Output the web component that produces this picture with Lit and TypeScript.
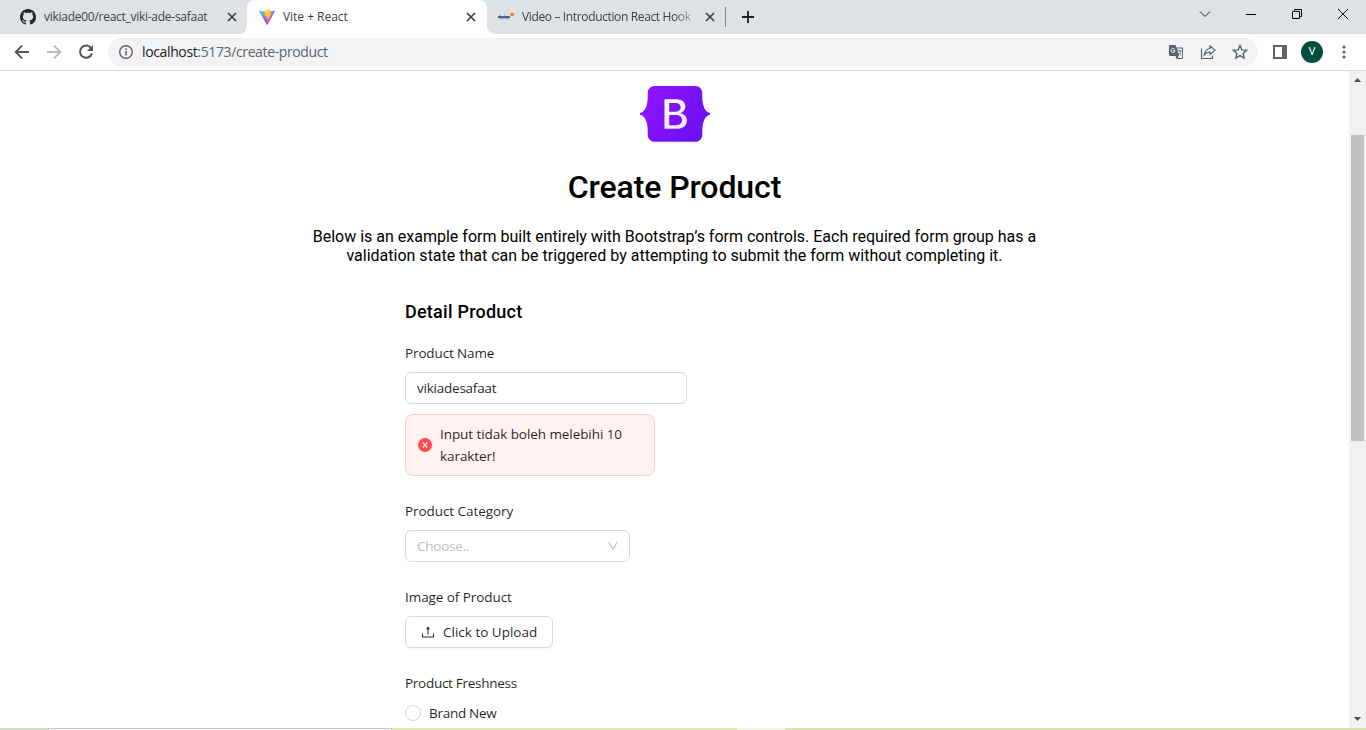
import { LitElement, html, css, svg } from "lit";
import { customElement } from "lit/decorators.js";

const closeIcon = html`<svg class="close" width="10" height="10" viewBox="0 0 10 10">
  <path d="M1 1l8 8M9 1l-8 8" stroke="#3c4043" stroke-width="1.7" fill="none" />
</svg>`;

const githubIcon = html`<svg width="16" height="16" viewBox="0 0 16 16">
  <path fill="#24292f" d="M8 0C3.58 0 0 3.58 0 8c0 3.54 2.29 6.53 5.47 7.59.4.07.55-.17.55-.38 0-.19-.01-.82-.01-1.49-2.01.37-2.53-.49-2.69-.94-.09-.23-.48-.94-.82-1.13-.28-.15-.68-.52-.01-.53.63-.01 1.08.58 1.23.82.72 1.21 1.87.87 2.33.66.07-.52.28-.87.51-1.07-1.78-.2-3.64-.89-3.64-3.95 0-.87.31-1.59.82-2.15-.08-.2-.36-1.02.08-2.12 0 0 .67-.21 2.2.82.64-.18 1.32-.27 2-.27s1.36.09 2 .27c1.53-1.04 2.2-.82 2.2-.82.44 1.1.16 1.92.08 2.12.51.56.82 1.27.82 2.15 0 3.07-1.87 3.75-3.65 3.95.29.25.54.73.54 1.48 0 1.07-.01 1.93-.01 2.2 0 .21.15.46.55.38A8.01 8.01 0 0 0 16 8c0-4.42-3.58-8-8-8z" />
</svg>`;

const viteIcon = html`<svg width="16" height="16" viewBox="0 0 256 257">
  <defs>
    <linearGradient id="vite-a" x1="-.8%" x2="57.6%" y1="7.7%" y2="78.4%">
      <stop offset="0%" stop-color="#41d1ff" /><stop offset="100%" stop-color="#bd34fe" />
    </linearGradient>
    <linearGradient id="vite-b" x1="43.4%" x2="50.3%" y1="2.2%" y2="89%">
      <stop offset="0%" stop-color="#ffea83" /><stop offset="8.3%" stop-color="#ffdd35" /><stop offset="100%" stop-color="#ffa800" />
    </linearGradient>
  </defs>
  <path fill="url(#vite-a)" d="M255.153 37.938L134.897 252.976c-2.483 4.44-8.862 4.466-11.382.048L.875 37.958c-2.746-4.814 1.371-10.646 6.827-9.67l120.385 21.517a6.537 6.537 0 0 0 2.322-.004l117.867-21.483c5.438-.991 9.574 4.796 6.877 9.62z" />
  <path fill="url(#vite-b)" d="M185.432.063L96.44 17.501a3.268 3.268 0 0 0-2.634 3.014l-5.474 92.456a3.268 3.268 0 0 0 3.997 3.378l24.777-5.718c2.318-.535 4.413 1.507 3.936 3.838l-7.361 36.047c-.495 2.426 1.782 4.5 4.151 3.78l15.304-4.649c2.372-.72 4.652 1.36 4.15 3.788l-11.698 56.621c-.732 3.542 3.979 5.473 5.943 2.437l1.313-2.028l72.516-144.72c1.215-2.423-.88-5.186-3.54-4.672l-25.505 4.922c-2.396.462-4.435-1.77-3.759-4.114l16.646-57.705c.677-2.35-1.37-4.583-3.769-4.113z" />
</svg>`;

const starPath = svg`<path d="M8 1.6l1.9 4.3 4.7.45-3.5 3.1 1 4.6L8 11.6l-4.1 2.45 1-4.6-3.5-3.1 4.7-.45z" fill="none" stroke="#5f6368" stroke-width="1.4" />`;

@customElement("browser-tabs")
class BrowserTabs extends LitElement {
  static styles = css`
    :host { display: flex; height: 34px; background: #dee1e6; font: 12px "Open Sans", "Noto Sans", sans-serif; color: #3c4043; }
    .tab { display: flex; align-items: center; box-sizing: border-box; height: 34px; white-space: nowrap; }
    .first { width: 247px; padding: 0 10px 0 20px; border-radius: 0 0 8px 0; }
    .last { width: 238px; padding: 0 10px 0 11px; border-radius: 0 0 0 8px; }
    .shade { background: #dee1e6; }
    .under { background: #fff; display: flex; }
    .active-bg { background: #dee1e6; }
    .active { width: 240px; padding: 0 11px 0 12px; background: #fff; border-radius: 8px 8px 0 0; }
    .name { flex: 1; margin-left: 8px; line-height: 18px; }
    .n1 { letter-spacing: -0.27px; }
    .n2 { letter-spacing: -0.03px; }
    .n3 { letter-spacing: -0.36px; -webkit-mask-image: linear-gradient(90deg, #000 88%, rgba(0, 0, 0, 0.25)); margin-right: 11px; }
    .close { flex: none; }
    .sep { width: 1px; height: 20px; margin: 7px 16px 0 0; background: #80868b; }
    .plus { margin-top: 11px; }
    .win { display: flex; margin-left: auto; margin-right: 17px; gap: 34px; padding-top: 8px; }
  `;
  render() {
    return html`
      <div class="under"><div class="tab first shade">${githubIcon}<span class="name n1">vikiade00/react_viki-ade-safaat</span>${closeIcon}</div></div>
      <div class="active-bg"><div class="tab active">${viteIcon}<span class="name n2">Vite + React</span>${closeIcon}</div></div>
      <div class="under"><div class="tab last shade">
        <svg width="16" height="16" viewBox="0 0 16 16"><path d="M0 7h12v2H0z" fill="#4c6385" /><path d="M1 6.3h2M6 5.8h1M1 9.6h10" stroke="#8b9bb2" stroke-width=".8" /><circle cx="14.2" cy="5.6" r="1.8" fill="#f4742b" /></svg>
        <span class="name n3">Video – Introduction React Hook</span>${closeIcon}</div></div>
      <div class="sep"></div>
      <svg class="plus" width="12" height="12" viewBox="0 0 12 12"><path d="M6 0v12M0 6h12" stroke="#202124" stroke-width="1.8" /></svg>
      <div class="win">
        <svg width="12" height="12" viewBox="0 0 12 12"><path d="M1 3.5l5 5 5-5" fill="none" stroke="#222" /></svg>
        <svg width="12" height="12" viewBox="0 0 12 12"><path d="M1 6.5h10" stroke="#000" /></svg>
        <svg width="12" height="12" viewBox="0 0 12 12"><path d="M1.5 3.5h7v7h-7zM3.5 3.5v-2h7v7h-2" fill="none" stroke="#000" /></svg>
        <svg width="12" height="12" viewBox="0 0 12 12"><path d="M1 1l10 10M11 1L1 11" stroke="#111" /></svg>
      </div>`;
  }
}

@customElement("browser-toolbar")
class BrowserToolbar extends LitElement {
  static styles = css`
    :host { display: flex; align-items: center; box-sizing: border-box; height: 37px; padding: 0 14px; border-bottom: 1px solid #d9dadc; background: #fff; }
    .nav { display: flex; gap: 16px; margin-right: 14px; }
    .bar { display: flex; flex: none; align-items: center; box-sizing: border-box; width: 1150px; height: 28px; padding: 0 10px; border-radius: 14px; background: #f1f3f4; }
    .url { flex: 1; margin-left: 8px; font: 14px/20px "Open Sans", "Noto Sans", sans-serif; letter-spacing: -0.37px; color: #5f6368; white-space: nowrap; }
    .host { color: #202124; }
    .acts { display: flex; gap: 16px; }
    .right { display: flex; align-items: center; margin-left: 14px; }
    .avatar { width: 22px; height: 22px; margin: 0 13px; border-radius: 50%; background: #004d40; color: #fff; text-align: center; font: 11px/22px Roboto, sans-serif; }
  `;
  render() {
    return html`
      <div class="nav">
        <svg width="16" height="16" viewBox="0 0 16 16"><path d="M15 8H2M8 1.7L1.7 8 8 14.3" fill="none" stroke="#54585c" stroke-width="1.9" /></svg>
        <svg width="16" height="16" viewBox="0 0 16 16"><path d="M1 8h13M8 1.7L14.3 8 8 14.3" fill="none" stroke="#babcbe" stroke-width="1.9" /></svg>
        <svg width="16" height="16" viewBox="0 0 16 16"><path d="M13.2 4.2A6.1 6.1 0 1 0 14 9.4" fill="none" stroke="#54585c" stroke-width="2" /><path d="M15 1v6H9z" fill="#54585c" /></svg>
      </div>
      <div class="bar">
        <svg width="16" height="16" viewBox="0 0 16 16"><circle cx="8" cy="8" r="6.3" fill="none" stroke="#5f6368" stroke-width="1.4" /><path d="M8 7v4.5M8 4.3v1.6" stroke="#5f6368" stroke-width="1.6" /></svg>
        <span class="url"><span class="host">localhost</span>:5173/create-product</span>
        <div class="acts">
          <svg width="16" height="16" viewBox="0 0 16 16">
            <path d="M2 1h5.5l1 2.5H14a1 1 0 0 1 1 1V14a1 1 0 0 1-1 1H8.5l-1-3H2a1 1 0 0 1-1-1V2a1 1 0 0 1 1-1z" fill="#5f6368" />
            <path d="M9 4.5h5v9.5H9.4l1.5-2z" fill="#f1f3f4" />
            <path d="M9.3 6.8h4.2M11.5 5.8v1M13 7c-.4 1.7-1.5 3-3 4M10.3 8.5c.6 1.2 1.5 2 2.7 2.8" fill="none" stroke="#5f6368" stroke-width=".9" />
            <path d="M6.4 5a2 2 0 1 0 .6 1.6H5.1" fill="none" stroke="#f1f3f4" stroke-width="1" />
          </svg>
          <svg width="16" height="16" viewBox="0 0 16 16"><path d="M1.5 4.5v10h11v-3" fill="none" stroke="#5f6368" stroke-width="1.2" /><path d="M10 2l5 4.3-5 4.2V8.2c-2.7 0-4.400.8-5.800 2.600.4-3.200 2.200-5.700 5.800-6.300z" fill="none" stroke="#5f6368" stroke-width="1.2" /></svg>
          <svg width="16" height="16" viewBox="0 0 16 16">${starPath}</svg>
        </div>
      </div>
      <div class="right">
        <svg width="16" height="16" viewBox="0 0 16 16"><path d="M2 2h12v12H2z" fill="#fff" stroke="#5f6368" stroke-width="2" /><path d="M10 2h4v12h-4z" fill="#5f6368" /></svg>
        <div class="avatar">V</div>
        <svg width="16" height="16" viewBox="0 0 16 16" fill="#5f6368"><circle cx="8" cy="3" r="1.6" /><circle cx="8" cy="8" r="1.6" /><circle cx="8" cy="13" r="1.6" /></svg>
      </div>`;
  }
}

@customElement("product-form")
class ProductForm extends LitElement {
  static styles = css`
    :host { display: block; flex: 1; color: #000; font-family: Roboto, sans-serif; }
    .head { display: flex; flex-direction: column; align-items: center; text-align: center; padding-top: 15px; }
    .logo { display: block; }
    h1 { margin: 26px 0 0; font-size: 32px; line-height: 38px; font-weight: 500; letter-spacing: -0.08px; }
    .lead { width: 760px; margin: 21px 0 0; font-size: 16px; line-height: 19px; }
    .form { width: 540px; margin-left: 405px; padding-top: 36px; font: 13.5px/22px "Open Sans", "Noto Sans", sans-serif; color: rgba(0, 0, 0, 0.88); }
    h2 { margin: 0; font: 500 18px/22px Roboto, sans-serif; letter-spacing: 0.24px; color: #000; }
    .label { margin-bottom: 8px; }
    .t1 { letter-spacing: -0.13px; }
    .t2 { letter-spacing: -0.23px; }
    .t3 { letter-spacing: -0.07px; }
    .t4 { letter-spacing: -0.28px; }
    .box { display: flex; align-items: center; box-sizing: border-box; height: 32px; border: 1px solid #d9d9d9; border-radius: 6px; background: #fff; padding: 0 11px; }
    .name { width: 282px; }
    .select { width: 225px; padding-right: 10px; justify-content: space-between; color: #bfbfbf; }
    .upload { width: 148px; padding: 0 15px; gap: 8px; box-shadow: 0 2px 0 rgba(0, 0, 0, 0.02); white-space: nowrap; }
    .field { margin-top: 24px; }
    .firstfield { margin-top: 19px; }
    .alert { display: flex; align-items: center; gap: 8px; box-sizing: border-box; width: 250px; height: 62px; margin-top: 10px; padding: 0 12px; border: 1px solid #ffccc7; border-radius: 8px; background: #fff2f0; }
    .radio { display: flex; align-items: center; gap: 8px; }
    .dot { box-sizing: border-box; width: 16px; height: 16px; border: 1px solid #d9d9d9; border-radius: 50%; }
    svg { flex: none; }
  `;
  render() {
    return html`
      <div class="head">
        <svg class="logo" width="70" height="56" viewBox="0 0 512 408">
          <defs>
            <linearGradient id="bs-a" x1="76" x2="523" y1="10" y2="366" gradientUnits="userSpaceOnUse"><stop stop-color="#9013fe" /><stop offset="1" stop-color="#6610f2" /></linearGradient>
            <linearGradient id="bs-b" x1="194" x2="293" y1="94" y2="262" gradientUnits="userSpaceOnUse"><stop stop-color="#fff" /><stop offset="1" stop-color="#f1e5fc" /></linearGradient>
          </defs>
          <path fill="url(#bs-a)" d="M56.5 53.3C55.500 24.600 77.800 0 106.300 0h299.500c28.500 0 50.800 24.600 49.800 53.300-.9 27.500.3 63.200 9.300 92.200 9 29.200 24.300 47.600 47.200 51.400v13c-23 3.800-38.300 22.300-47.200 51.400-9 29-10.200 64.700-9.300 92.200 1 28.700-21.300 53.300-49.800 53.300H106.300c-28.500 0-50.800-24.600-49.800-53.300.9-27.500-.3-63.200-9.300-92.200-9-29.200-24.300-47.600-47.200-51.400v-13c23-3.800 38.300-22.300 47.200-51.400 9-29 10.200-64.700 9.300-92.200z" />
          <path fill="url(#bs-b)" d="M267.100 312.500c47.300 0 75.800-23.200 75.800-61.400 0-28.900-20.300-49.800-50.500-53.100v-1.200c22.200-3.600 39.500-24.200 39.500-47 0-32.500-25.600-53.600-64.700-53.600h-88v216.300zM213.700 123.200h45c24.500 0 38.300 10.900 38.300 30.700 0 21.100-16.200 32.900-45.500 32.900h-37.800zm0 162.700v-74.800h44.700c32 0 48.600 12.600 48.600 37.200 0 24.600-16.200 37.600-46.700 37.600z" />
        </svg>
        <h1>Create Product</h1>
        <p class="lead">Below is an example form built entirely with Bootstrap’s form controls. Each required form group has a<br />validation state that can be triggered by attempting to submit the form without completing it.</p>
      </div>
      <div class="form">
        <h2>Detail Product</h2>
        <div class="firstfield">
          <div class="label t1">Product Name</div>
          <div class="box name t2">vikiadesafaat</div>
          <div class="alert">
            <svg width="14" height="14" viewBox="0 0 14 14"><circle cx="7" cy="7" r="7" fill="#ff4d4f" /><path d="M4.700 4.400l4.600 5.200M9.300 4.400L4.700 9.600" stroke="#fff" stroke-width="1.1" /></svg>
            <span class="t3">Input tidak boleh melebihi 10<br />karakter!</span>
          </div>
        </div>
        <div class="field">
          <div class="label t3">Product Category</div>
          <div class="box select"><span class="t2">Choose..</span><svg width="12" height="12" viewBox="0 0 12 12"><path d="M1.500 2l4.500 7 4.500-7" fill="none" stroke="#bfbfbf" stroke-width="1.100" /></svg></div>
        </div>
        <div class="field">
          <div class="label t3">Image of Product</div>
          <div class="box upload"><svg width="14" height="14" viewBox="0 0 14 14"><path d="M1.500 8.500v3.500h11V8.500M7 9.500V2.500" fill="none" stroke="#333" stroke-width="1.100" /><path d="M4.800 4.200L7 1.400l2.200 2.800z" fill="#333" /></svg><span>Click to Upload</span></div>
        </div>
        <div class="field">
          <div class="label t4">Product Freshness</div>
          <div class="radio"><span class="dot"></span><span class="t4">Brand New</span></div>
        </div>
      </div>`;
  }
}

@customElement("app-root")
class AppRoot extends LitElement {
  static styles = css`
    :host { display: flex; flex-direction: column; width: 1366px; height: 730px; overflow: hidden; background: #fff; }
    browser-tabs, browser-toolbar { flex: none; }
    .page { display: flex; height: 657px; overflow: hidden; }
    .scroll { display: flex; flex-direction: column; width: 17px; background: #f1f1f1; align-items: center; }
    .thumb { width: 13px; height: 306px; margin-top: 47px; background: #c1c1c1; }
    .up { width: 17px; height: 17px; }
    .down { width: 17px; height: 17px; margin-top: auto; }
    .edge { display: flex; height: 2px; }
    .e1 { width: 48px; background: #d6ddc5; }
    .e2 { box-sizing: border-box; width: 344px; border: solid #c6c6c6; border-width: 1px 1px 0; background: #fff; }
    .e3 { width: 345px; background: #dfe8a8; }
    .e4 { width: 48px; background: #f2f5e4; }
    .e5 { flex: 1; background: #dce3ad; }
  `;
  render() {
    return html`
      <browser-tabs></browser-tabs>
      <browser-toolbar></browser-toolbar>
      <div class="page">
        <product-form></product-form>
        <div class="scroll">
          <svg class="up" viewBox="0 0 17 17"><path d="M5 11h7L8.500 7z" fill="#505050" /></svg>
          <div class="thumb"></div>
          <svg class="down" viewBox="0 0 17 17"><path d="M5 6h7L8.500 10z" fill="#505050" /></svg>
        </div>
      </div>
      <div class="edge"><div class="e1"></div><div class="e2"></div><div class="e3"></div><div class="e4"></div><div class="e5"></div></div>`;
  }
}
